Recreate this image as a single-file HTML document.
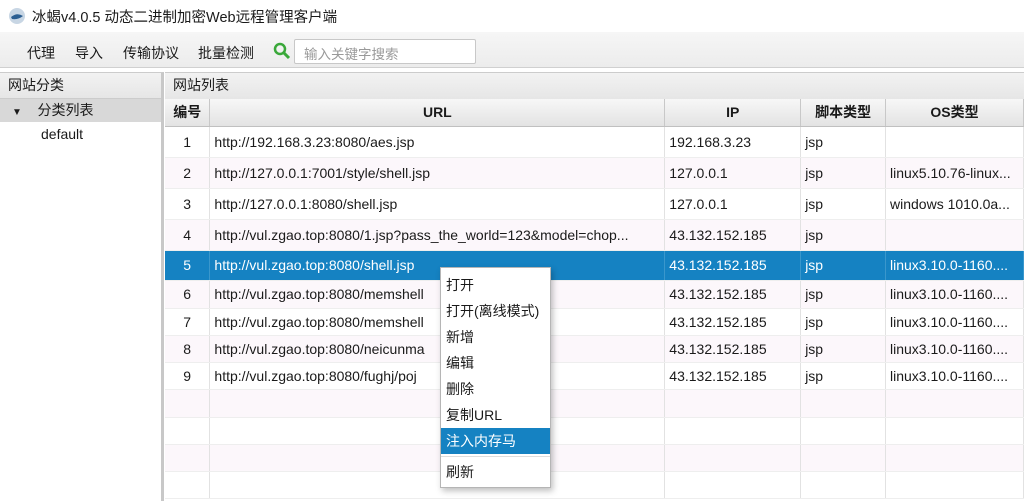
<!DOCTYPE html>
<html><head><meta charset="utf-8"><style>
*{margin:0;padding:0;box-sizing:border-box}
body{width:1024px;height:501px;overflow:hidden;background:#fff;font-family:"Liberation Sans","Noto Sans CJK SC",sans-serif;font-size:14px;color:#1a1a1a;position:relative}
.abs{position:absolute}
.title{left:0;top:0;width:1024px;height:32px;background:#fff}
.tb{left:0;top:32px;width:1024px;height:36px;background:linear-gradient(#f6f6f6,#ececec);border-bottom:1px solid #d0d0d0}
.tb span{position:absolute;top:11px;font-size:14px}
.lp{left:0;top:72px;width:164px;height:429px;background:#fff;border-right:3px solid #c8c8c8;border-top:1px solid #ccc}
.hdr{background:linear-gradient(#f2f2f2,#e6e6e6);border-bottom:1px solid #ccc;height:26px;line-height:25px;padding-left:8px}
.rp{left:165px;top:72px;width:859px;height:429px;border-top:1px solid #ccc}
table{position:absolute;left:165px;top:99px;border-collapse:collapse;table-layout:fixed;font-size:14px}
td{border-right:1px solid #e2e2e2;border-bottom:1px solid #eee;padding-left:4px;white-space:nowrap;overflow:hidden}
th{background:linear-gradient(#f7f7f7,#e3e3e3);border-right:1px solid #c8c8c8;border-bottom:1px solid #c0c0c0;height:27px;font-weight:bold;font-size:14px}
tr.p td{background:#fcf7fb}
tr.s td{background:#1582c2;color:#fff;border-right-color:#3a97cc}
.menu{left:440px;top:267px;width:111px;height:221px;background:#fff;border:1px solid #b5b5b5;box-shadow:2px 3px 6px rgba(0,0,0,.25)}
.menu div{height:26px;line-height:26px;padding-left:5px;font-size:14px}
</style></head><body>
<div class="abs title">
<svg class="abs" style="left:8px;top:7px" width="18" height="18"><circle cx="9" cy="9" r="8" fill="#c8d6e4"/><path d="M3 10 Q9 5 15 9 Q10 13 4 12Z" fill="#2c5f92"/></svg>
<span class="abs" style="left:32px;top:6px;font-size:14.5px">冰蝎v4.0.5 动态二进制加密Web远程管理客户端</span></div>
<div class="abs tb">
<span style="left:27px">代理</span><span style="left:75px">导入</span><span style="left:123px">传输协议</span><span style="left:198px">批量检测</span>
<svg class="abs" style="left:273px;top:10px" width="18" height="18"><circle cx="7" cy="7" r="5" fill="none" stroke="#3aa83a" stroke-width="2.5"/><path d="M11 11 L16 16" stroke="#3aa83a" stroke-width="3"/></svg>
<div class="abs" style="left:294px;top:7px;width:182px;height:25px;background:#fff;border:1px solid #c8c8c8;border-radius:2px;color:#999;padding:3px 0 0 9px;font-size:13.5px">输入关键字搜索</div>
</div>
<div class="abs lp"><div class="hdr">网站分类</div>
<div style="height:23px;line-height:23px;background:#d8d8d8;padding-left:12px"><span style="font-size:10px">▼</span>&nbsp;&nbsp;&nbsp;&nbsp;分类列表</div>
<div style="padding-left:41px;line-height:24px">default</div></div>
<div class="abs rp"><div class="hdr" style="height:27px">网站列表</div></div>
<table>
<colgroup><col style="width:45px"><col style="width:455px"><col style="width:136px"><col style="width:85px"><col style="width:138px"></colgroup>
<tr><th>编号</th><th>URL</th><th>IP</th><th>脚本类型</th><th>OS类型</th></tr>
<tr style="height:31px"><td style="text-align:center;padding:0">1</td><td>http://192.168.3.23:8080/aes.jsp</td><td>192.168.3.23</td><td>jsp</td><td></td></tr>
<tr class="p" style="height:31px"><td style="text-align:center;padding:0">2</td><td>http://127.0.0.1:7001/style/shell.jsp</td><td>127.0.0.1</td><td>jsp</td><td>linux5.10.76-linux...</td></tr>
<tr style="height:31px"><td style="text-align:center;padding:0">3</td><td>http://127.0.0.1:8080/shell.jsp</td><td>127.0.0.1</td><td>jsp</td><td>windows 1010.0a...</td></tr>
<tr class="p" style="height:31px"><td style="text-align:center;padding:0">4</td><td>http://vul.zgao.top:8080/1.jsp?pass_the_world=123&amp;model=chop...</td><td>43.132.152.185</td><td>jsp</td><td></td></tr>
<tr class="s" style="height:30px"><td style="text-align:center;padding:0">5</td><td>http://vul.zgao.top:8080/shell.jsp</td><td>43.132.152.185</td><td>jsp</td><td>linux3.10.0-1160....</td></tr>
<tr class="p" style="height:28px"><td style="text-align:center;padding:0">6</td><td>http://vul.zgao.top:8080/memshell</td><td>43.132.152.185</td><td>jsp</td><td>linux3.10.0-1160....</td></tr>
<tr style="height:27px"><td style="text-align:center;padding:0">7</td><td>http://vul.zgao.top:8080/memshell</td><td>43.132.152.185</td><td>jsp</td><td>linux3.10.0-1160....</td></tr>
<tr class="p" style="height:27px"><td style="text-align:center;padding:0">8</td><td>http://vul.zgao.top:8080/neicunma</td><td>43.132.152.185</td><td>jsp</td><td>linux3.10.0-1160....</td></tr>
<tr style="height:27px"><td style="text-align:center;padding:0">9</td><td>http://vul.zgao.top:8080/fughj/poj</td><td>43.132.152.185</td><td>jsp</td><td>linux3.10.0-1160....</td></tr>
<tr class="p" style="height:28px"><td></td><td></td><td></td><td></td><td></td></tr>
<tr style="height:27px"><td></td><td></td><td></td><td></td><td></td></tr>
<tr class="p" style="height:27px"><td></td><td></td><td></td><td></td><td></td></tr>
<tr style="height:27px"><td></td><td></td><td></td><td></td><td></td></tr>
</table>
<div class="abs menu">
<div style="margin-top:4px">打开</div><div>打开(离线模式)</div><div>新增</div><div>编辑</div><div>删除</div><div>复制URL</div>
<div style="background:#1582c2;color:#fff">注入内存马</div>
<div style="height:1px;background:#ddd;margin:2px 0"></div>
<div>刷新</div></div>
</body></html>
